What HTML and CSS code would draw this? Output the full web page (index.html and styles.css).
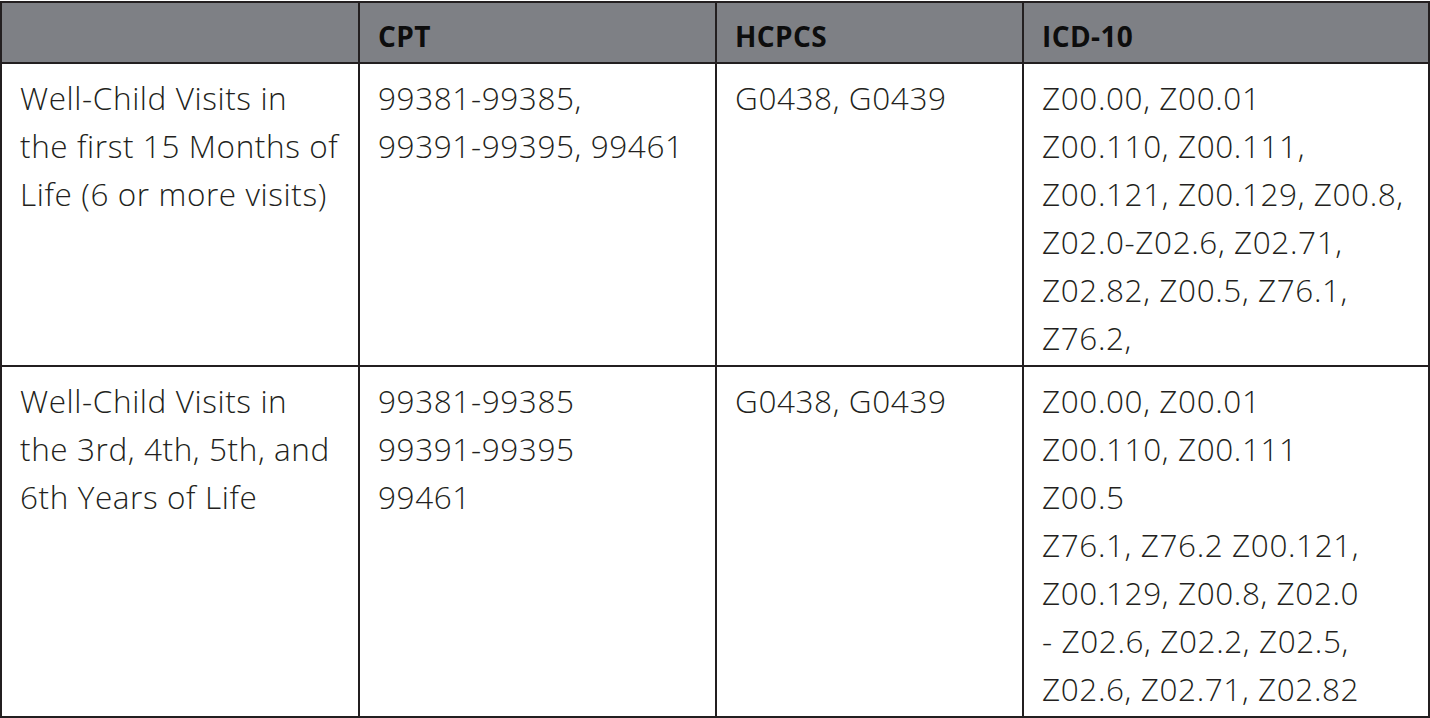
FILE: index.html
```html
<!DOCTYPE html>
<html>
<head>
<meta charset="utf-8">
<link rel="stylesheet" href="styles.css">
</head>
<body>
<table class="codes">
  <colgroup>
    <col class="c1"><col class="c2"><col class="c3"><col class="c4">
  </colgroup>
  <thead>
    <tr>
      <th></th>
      <th>CPT</th>
      <th>HCPCS</th>
      <th>ICD-10</th>
    </tr>
  </thead>
  <tbody>
    <tr class="r1">
      <td>Well-Child Visits in<br>the first 15 Months of<br>Life (6 or more visits)</td>
      <td>99381-99385,<br>99391-99395, 99461</td>
      <td>G0438, G0439</td>
      <td>Z00.00, Z00.01<br>Z00.110, Z00.111,<br>Z00.121, Z00.129, Z00.8,<br>Z02.0-Z02.6, Z02.71,<br>Z02.82, Z00.5, Z76.1,<br>Z76.2,</td>
    </tr>
    <tr class="r2">
      <td>Well-Child Visits in<br>the 3rd, 4th, 5th, and<br>6th Years of Life</td>
      <td>99381-99385<br>99391-99395<br>99461</td>
      <td>G0438, G0439</td>
      <td>Z00.00, Z00.01<br>Z00.110, Z00.111<br>Z00.5<br>Z76.1, Z76.2 Z00.121,<br>Z00.129, Z00.8, Z02.0<br>- Z02.6, Z02.2, Z02.5,<br>Z02.6, Z02.71, Z02.82</td>
    </tr>
  </tbody>
</table>
</body>
</html>
```
FILE: styles.css
```css
html, body {
  margin: 0;
  padding: 0;
  background: #ffffff;
}
body {
  padding: 1px 0 0 0;
}
.codes {
  border-collapse: collapse;
  table-layout: fixed;
  width: 1428px;
  font-family: "Open Sans", "Liberation Sans", sans-serif;
  color: #231f20;
}
.c1 { width: 358px; }
.c2 { width: 357px; }
.c3 { width: 307px; }
.c4 { width: 406px; }
.codes th, .codes td {
  border: 2px solid #231f20;
  text-align: left;
  vertical-align: top;
}
.codes th {
  background: #7e8085;
  font-weight: 700;
  font-size: 28px;
  letter-spacing: 0.4px;
  line-height: 36px;
  height: 59px;
  padding: 15px 18px 8px;
  box-sizing: border-box;
  color: #0d0d0d;
  vertical-align: top;
}
.codes td {
  font-weight: 300;
  font-size: 31.5px;
  letter-spacing: 0.6px;
  line-height: 48px;
  padding: 10px 18px 2px;
}
.r1 td { height: 303px; box-sizing: border-box; }
.r2 td { height: 351px; box-sizing: border-box; }
```
